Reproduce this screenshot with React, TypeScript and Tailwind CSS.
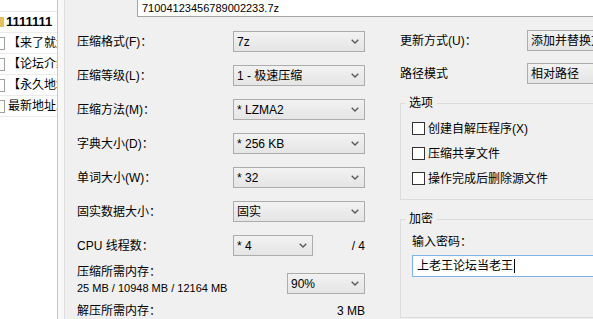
import React from "react";

const files = [
  { name: "1111111", folder: true },
  { name: "【来了就送福利】", folder: false },
  { name: "【论坛介绍】", folder: false },
  { name: "【永久地址】", folder: false },
  { name: "最新地址发布页", folder: false },
];

const settings = [
  { label: "压缩格式(F)：", value: "7z" },
  { label: "压缩等级(L)：", value: "1 - 极速压缩" },
  { label: "压缩方法(M)：", value: "* LZMA2" },
  { label: "字典大小(D)：", value: "* 256 KB" },
  { label: "单词大小(W)：", value: "* 32" },
  { label: "固实数据大小：", value: "固实" },
];

const options = ["创建自解压程序(X)", "压缩共享文件", "操作完成后删除源文件"];

function Chevron() {
  return (
    <svg width="8" height="5" viewBox="0 0 8 5" className="shrink-0">
      <path d="M0.7 0.7 L4 4 L7.3 0.7" fill="none" stroke="#5a5a5a" strokeWidth="1.4" />
    </svg>
  );
}

function Combo({ value, className }: { value: string; className: string }) {
  return (
    <div
      className={`flex h-[21px] shrink-0 items-center justify-between border border-[#acacac] bg-linear-to-b from-[#f2f2f2] to-[#e5e5e5] pl-[3px] pr-[5px] ${className}`}
    >
      <span className="overflow-hidden whitespace-nowrap">{value}</span>
      <Chevron />
    </div>
  );
}

function CheckRow({ label }: { label: string }) {
  return (
    <div className="flex h-[13px] items-center gap-[3px]">
      <div className="h-[13px] w-[13px] shrink-0 border border-[#333333] bg-white" />
      <span className="whitespace-nowrap">{label}</span>
    </div>
  );
}

export default function App() {
  return (
    <div className="flex h-[319px] w-[593px] overflow-hidden bg-[#f0f0f0] font-['Liberation_Sans','Noto_Sans_CJK_SC',sans-serif] text-[12px] leading-4 text-black">
      {/* file list behind the dialog */}
      <div className="flex w-[57px] shrink-0 flex-col overflow-hidden bg-white">
        <div className="h-[12px] shrink-0 border-b border-[#e6e6e6]" />
        {files.map((f) => (
          <div
            key={f.name}
            className="flex h-[21px] shrink-0 items-center border-b border-[#ececec] whitespace-nowrap"
          >
            {f.folder ? (
              <div className="h-[10px] w-[4px] shrink-0 bg-[#e6bf5c]" />
            ) : (
              <div className="h-[13px] w-[5px] shrink-0 border-y border-r border-[#a0a0a0] bg-white" />
            )}
            <span className={f.folder ? "ml-[2px] text-[13px] font-bold" : "ml-[3px]"}>{f.name}</span>
          </div>
        ))}
      </div>
      <div className="w-px shrink-0 bg-[#c6c6c6]" />
      <div className="w-[6px] shrink-0 bg-[#f8f8f8]" />
      <div className="w-px shrink-0 bg-[#dedede]" />

      {/* dialog body */}
      <div className="flex min-w-0 flex-1 flex-col overflow-hidden">
        <div className="flex pl-[72px]">
          <div className="flex h-[17px] w-[500px] shrink-0 items-center border-x border-b border-[#a5a5a5] bg-white pl-[4px] text-[11px] whitespace-nowrap">
            71004123456789002233.7z
          </div>
        </div>

        <div className="flex">
          {/* left column */}
          <div className="flex w-[300px] shrink-0 flex-col pl-[12px] pt-[14px]">
            <div className="flex flex-col gap-[13px]">
              {settings.map((s) => (
                <div key={s.label} className="flex h-[21px] items-center">
                  <span className="w-[156px] shrink-0 whitespace-nowrap">{s.label}</span>
                  <Combo value={s.value} className="w-[132px]" />
                </div>
              ))}
              <div className="flex h-[21px] items-center">
                <span className="w-[156px] shrink-0 whitespace-nowrap">CPU 线程数：</span>
                <Combo value="* 4" className="w-[80px]" />
                <span className="flex-1 text-right">/ 4</span>
              </div>
            </div>

            <div className="mt-[8px] flex justify-between">
              <div className="whitespace-nowrap">
                <div>压缩所需内存：</div>
                <div className="text-[11px]">25 MB / 10948 MB / 12164 MB</div>
              </div>
              <Combo value="90%" className="mt-[9px] w-[78px]" />
            </div>

            <div className="mt-[7px] flex justify-between whitespace-nowrap">
              <span>解压所需内存：</span>
              <span>3 MB</span>
            </div>
          </div>

          {/* right column */}
          <div className="ml-[35px] flex w-[230px] shrink-0 flex-col pt-[13px]">
            <div className="flex h-[21px] items-center">
              <span className="w-[127px] shrink-0 whitespace-nowrap">更新方式(U)：</span>
              <Combo value="添加并替换文件" className="w-[120px]" />
            </div>
            <div className="mt-[12px] flex h-[21px] items-center">
              <span className="w-[127px] shrink-0 whitespace-nowrap">路径模式</span>
              <Combo value="相对路径" className="w-[120px]" />
            </div>

            <fieldset className="mt-[11px] border border-[#dcdcdc]">
              <legend className="ml-[4px] px-[4px] leading-4">选项</legend>
              <div className="flex flex-col gap-[12px] pb-[14px] pl-[11px] pt-[11px]">
                {options.map((o) => (
                  <CheckRow key={o} label={o} />
                ))}
              </div>
            </fieldset>

            <fieldset className="mt-[11px] border border-[#dcdcdc]">
              <legend className="ml-[4px] px-[4px] leading-4">加密</legend>
              <div className="flex flex-col pb-[40px] pl-[11px] pt-[7px]">
                <div>输入密码：</div>
                <div className="mt-[5px] flex h-[22px] items-center border border-[#7eb4ea] bg-white pl-[4px] whitespace-nowrap">
                  上老王论坛当老王
                  <span className="ml-px inline-block h-[14px] w-px bg-black" />
                </div>
              </div>
            </fieldset>
          </div>
        </div>
      </div>
    </div>
  );
}
